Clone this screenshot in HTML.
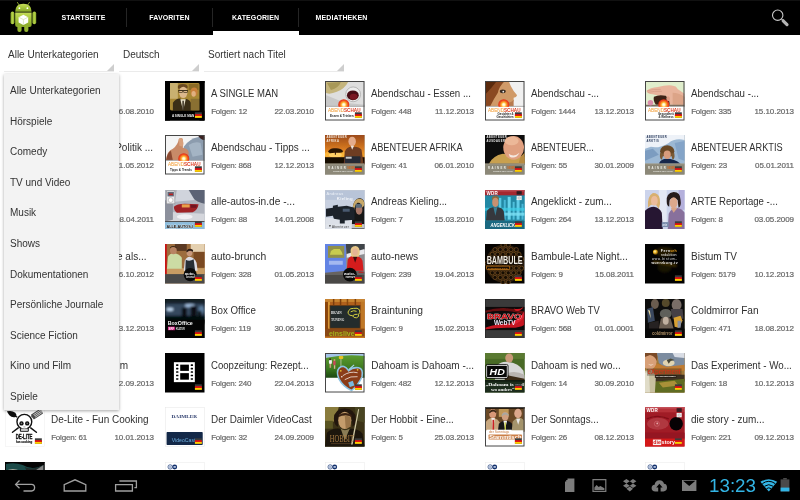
<!DOCTYPE html>
<html lang="de"><head><meta charset="utf-8"><title>Podcasts</title>
<style>
html,body{margin:0;padding:0;}
body{width:800px;height:500px;overflow:hidden;background:#fff;position:relative;font-family:"Liberation Sans",sans-serif;color:#333;}
#bar{position:absolute;left:0;top:0;width:800px;height:35px;background:#000;border-top:1px solid #111;box-sizing:border-box;}
#bar .tab{will-change:transform;position:absolute;top:-1px;height:35px;line-height:35px;color:#fff;font-size:7px;font-weight:bold;text-align:center;letter-spacing:0.1px;}
#bar .dv{position:absolute;top:6.5px;height:19.5px;width:1px;background:#252525;}
#bar .sel{position:absolute;left:213px;top:30px;width:86px;height:4px;background:#fff;}
.sp{will-change:transform;position:absolute;top:48px;height:23px;border-bottom:1px solid #ebebeb;font-size:10px;line-height:14px;color:#333;}
.sp span{position:absolute;left:4px;top:0;white-space:nowrap;}
.sp i{position:absolute;right:0;bottom:0;width:0;height:0;border-left:7px solid transparent;border-bottom:7px solid #cecece;}
#grid{will-change:transform;position:absolute;left:0;top:0;width:800px;height:470px;overflow:hidden;}
.it{position:absolute;width:160px;height:40px;}
.it .th{position:absolute;left:5px;top:0;width:39.5px;height:39.5px;display:block;overflow:hidden;}
.it .t{position:absolute;left:51.3px;top:6.5px;font-size:10px;line-height:12px;white-space:nowrap;color:#303030;transform-origin:0 50%;}
.it .n{position:absolute;left:51.2px;top:25.7px;font-size:8px;line-height:10px;white-space:nowrap;color:#666;letter-spacing:-0.2px;-webkit-text-stroke:0.2px #666;}
.it .d{position:absolute;right:6px;top:25.7px;font-size:8px;line-height:10px;white-space:nowrap;color:#666;letter-spacing:-0.05px;-webkit-text-stroke:0.2px #666;}
#menu{will-change:transform;position:absolute;left:4px;top:73.5px;width:115px;height:336px;background:#f3f3f3;box-shadow:0 1px 3px rgba(0,0,0,0.35);}
#menu .mi{height:30.6px;line-height:33.7px;padding-left:6px;font-size:10px;color:#333;white-space:nowrap;box-sizing:border-box;overflow:visible;}
#menu .mi:last-child{border-bottom:none;}
#nav{position:absolute;left:0;top:470px;width:800px;height:30px;background:#000;}
#nav svg{position:absolute;left:0;top:0;}
#clock{will-change:transform;position:absolute;left:709.3px;top:4.2px;font-size:18.8px;line-height:24px;color:#33b5e5;white-space:nowrap;letter-spacing:0;}

</style></head>
<body>
<svg width="0" height="0" style="position:absolute">
<defs>
<filter id="b05" x="-10%" y="-10%" width="120%" height="120%"><feGaussianBlur stdDeviation="0.3"/></filter>
<filter id="b1" x="-10%" y="-10%" width="120%" height="120%"><feGaussianBlur stdDeviation="0.5"/></filter>
<filter id="b2" x="-20%" y="-20%" width="140%" height="140%"><feGaussianBlur stdDeviation="1.3"/></filter>
<radialGradient id="sun" cx="0.5" cy="0.5" r="0.5"><stop offset="0" stop-color="#fff"/><stop offset="0.22" stop-color="#fff4c0"/><stop offset="0.45" stop-color="#ffb030"/><stop offset="0.75" stop-color="#f0501c"/><stop offset="1" stop-color="#e02c18"/></radialGradient>
<radialGradient id="globe" cx="0.4" cy="0.4" r="0.6"><stop offset="0" stop-color="#fff8c0"/><stop offset="0.5" stop-color="#e8b020"/><stop offset="1" stop-color="#6a4808"/></radialGradient>
<linearGradient id="sunset" x1="0" y1="0" x2="0" y2="1"><stop offset="0" stop-color="#9c4a1a"/><stop offset="0.45" stop-color="#d47820"/><stop offset="0.68" stop-color="#f09c28"/><stop offset="1" stop-color="#7a3a10"/></linearGradient>
<linearGradient id="grass" x1="0" y1="0" x2="0" y2="1"><stop offset="0" stop-color="#5c9c30"/><stop offset="0.6" stop-color="#3c7820"/><stop offset="1" stop-color="#1c4810"/></linearGradient>
<linearGradient id="droid" x1="0" y1="0" x2="0" y2="1"><stop offset="0" stop-color="#c4dc58"/><stop offset="0.5" stop-color="#a4c439"/><stop offset="1" stop-color="#86a428"/></linearGradient>
<linearGradient id="droidarm" x1="0" y1="0" x2="1" y2="0"><stop offset="0" stop-color="#8cac2c"/><stop offset="0.5" stop-color="#b4d048"/><stop offset="1" stop-color="#8cac2c"/></linearGradient>
</defs>
</svg>
<div id="bar">
<svg id="logo" style="position:absolute;left:0;top:-1px" width="50" height="35" viewBox="0 0 50 35">
<path d="M17.4 2.4 L19.2 5.2 M29.4 2.4 L27.6 5.2" stroke="#a4c439" stroke-width="0.8" stroke-linecap="round"/>
<path d="M15.2 11.8 Q15.2 4 23.4 3.8 Q31.6 4 31.6 11.8 Z" fill="url(#droid)"/>
<circle cx="19.4" cy="8.2" r="0.9" fill="#fff"/><circle cx="27.4" cy="8.2" r="0.9" fill="#fff"/>
<path d="M15.2 12.6 L31.6 12.6 L31.6 25 Q31.6 27 29.6 27 L17.2 27 Q15.2 27 15.2 25 Z" fill="url(#droid)"/>
<rect x="10.6" y="11.6" width="3.8" height="12.6" rx="1.9" fill="url(#droidarm)"/>
<rect x="32.4" y="11.6" width="3.8" height="12.6" rx="1.9" fill="url(#droidarm)"/>
<rect x="17.4" y="25" width="4.2" height="7" rx="2" fill="#94b430"/>
<rect x="24.2" y="25" width="4.2" height="7" rx="2" fill="#94b430"/>
<path d="M23.4 14.8 L28.2 17.2 L28.2 22.6 L23.4 25 L18.6 22.6 L18.6 17.2 Z" fill="#fff"/>
<path d="M18.6 17.2 L23.4 19.6 L28.2 17.2 M23.4 19.6 L23.4 25" stroke="#c8d8a0" stroke-width="0.6" fill="none"/>
</svg>
<div class="tab" style="left:41px;width:85px">STARTSEITE</div>
<div class="dv" style="left:126px"></div>
<div class="tab" style="left:127px;width:85px">FAVORITEN</div>
<div class="dv" style="left:212px"></div>
<div class="tab" style="left:213px;width:85px">KATEGORIEN</div>
<div class="dv" style="left:298px"></div>
<div class="tab" style="left:299px;width:85px">MEDIATHEKEN</div>
<div class="sel"></div>
<svg style="position:absolute;left:765px;top:-1px" width="35" height="35" viewBox="0 0 35 35">
<circle cx="12.7" cy="15.2" r="5.2" fill="none" stroke="#c8c8c8" stroke-width="1.1"/>
<path d="M16.6 19.2 L18 20.6" stroke="#c8c8c8" stroke-width="1.2"/>
<path d="M18.2 20.8 L22 24.6" stroke="#b4b4b4" stroke-width="3.2" stroke-linecap="round"/>
</svg>
</div>
<div class="sp" style="left:4px;width:110px"><span>Alle Unterkategorien</span><i></i></div>
<div class="sp" style="left:119px;width:80px"><span>Deutsch</span><i></i></div>
<div class="sp" style="left:204px;width:140px"><span>Sortiert nach Titel</span><i></i></div>
<div id="grid">
<div class="it" style="left:0px;top:81.0px"><span class="d">16.08.2010</span></div>
<div class="it" style="left:160px;top:81.0px"><svg class="th" width="39.5" height="39.5" viewBox="0 0 40 40"><rect width="40" height="40" fill="#000"/><g filter="url(#b1)"><rect x="5" y="2" width="30.5" height="28" rx="2" fill="#a88834"/><rect x="5" y="2" width="8" height="16" fill="#c8b070"/><rect x="24" y="3" width="10" height="6" fill="#8a6a28"/><ellipse cx="29.5" cy="11" rx="3.5" ry="4.5" fill="#c8803a"/><ellipse cx="29" cy="13" rx="2.2" ry="3" fill="#e0b080"/><ellipse cx="18" cy="6" rx="5" ry="3" fill="#6a4a20"/><ellipse cx="18.5" cy="11.5" rx="4.3" ry="5.8" fill="#dcb88c"/><rect x="13.5" y="9.4" width="9.5" height="0.7" fill="#2a2010"/><rect x="14" y="9.6" width="3.6" height="2" fill="none" stroke="#2a2010" stroke-width="0.6"/><rect x="19" y="9.6" width="3.6" height="2" fill="none" stroke="#2a2010" stroke-width="0.6"/><path d="M8 30 L8 22 Q12 17 16 18 L18 22 L21 18 Q26 19 27 24 L27 30 Z" fill="#3a2e18"/><path d="M15.5 18.5 L18.3 30 L21 18.5 Z" fill="#e8e0c8"/><rect x="17.6" y="20" width="1.5" height="10" fill="#3a3020"/><rect x="26" y="18" width="9.5" height="12" fill="#8a7030"/></g><rect x="0" y="30" width="40" height="10" fill="#000"/><rect x="0" y="0" width="5" height="40" fill="#000"/><rect x="35" y="0" width="5" height="40" fill="#000"/><rect x="0" y="0" width="40" height="2" fill="#000"/><text x="7" y="36.5" font-family="Liberation Sans, sans-serif" font-size="4" font-weight="bold" fill="#f0f0f0" textLength="22.5" lengthAdjust="spacingAndGlyphs">A SINGLE MAN</text><g transform="translate(30.3,31.7)"><rect width="7" height="5.6" fill="#3c3c3c"/><rect y="1.9" width="7" height="1.9" fill="#e01010"/><rect y="3.7" width="7" height="1.9" fill="#ffce00"/></g></svg><span class="t" style="transform:scaleX(0.952)">A SINGLE MAN</span><span class="n">Folgen: 12</span><span class="d">22.03.2010</span></div>
<div class="it" style="left:320px;top:81.0px"><svg class="th" width="39.5" height="39.5" viewBox="0 0 40 40"><rect width="40" height="40" fill="#fff"/><g filter="url(#b1)"><rect width="40" height="26" fill="#dedede"/><path d="M0 0 L24 0 Q20 8 12 11 Q5 14 0 12 Z" fill="#c4b47c"/><path d="M2 2 L16 1 Q14 7 6 9 Z" fill="#a89858"/><path d="M0 14 L20 22 L40 24 L40 26 L0 26 Z" fill="#c8c8c8"/><circle cx="28.5" cy="13.5" r="7.5" fill="#ececec" stroke="#aaa" stroke-width="0.8"/><ellipse cx="28.2" cy="14.5" rx="6" ry="5" fill="#4a0c14"/><ellipse cx="29" cy="16" rx="4" ry="3" fill="#7a1820"/></g><rect x="0" y="25.6" width="40" height="15" fill="#fff"/><rect x="0" y="25.2" width="40" height="0.8" fill="#999"/><circle cx="19" cy="24" r="5.6" fill="url(#sun)"/><rect x="13" y="26.2" width="12" height="4" fill="#fff"/><text x="3" y="31.4" font-family="Liberation Sans, sans-serif" font-size="5.4" textLength="33" lengthAdjust="spacingAndGlyphs"><tspan fill="#f29a2e">ABEND</tspan><tspan fill="#dc3a1e" font-weight="bold">SCHAU</tspan></text><text x="5" y="36.2" font-family="Liberation Sans, sans-serif" font-size="3.1" font-weight="bold" fill="#222">Essen &amp; Trinken</text><rect x="0.5" y="0.5" width="39" height="39" fill="none" stroke="#444" stroke-width="1"/><g transform="translate(30.3,31.7)"><rect width="7" height="5.6" fill="#3c3c3c"/><rect y="1.9" width="7" height="1.9" fill="#e01010"/><rect y="3.7" width="7" height="1.9" fill="#ffce00"/></g></svg><span class="t" style="transform:scaleX(0.967)">Abendschau - Essen ...</span><span class="n">Folgen: 448</span><span class="d">11.12.2013</span></div>
<div class="it" style="left:480px;top:81.0px"><svg class="th" width="39.5" height="39.5" viewBox="0 0 40 40"><rect width="40" height="40" fill="#fff"/><g filter="url(#b1)"><rect width="40" height="26" fill="#f0f0f0"/><path d="M0 0 L24 0 Q26 6 29 10 L32.5 14.5 Q32 17 29 17 L29 20 Q27 23 26 26 L0 26 Z" fill="#d09a68"/><path d="M0 0 L20 0 Q14 6 13 12 Q9 18 5 26 L0 26 Z" fill="#8a4a20"/><path d="M0 0 L12 0 Q6 8 0 14 Z" fill="#5a2a10"/><ellipse cx="18" cy="10.5" rx="3" ry="2" fill="#3a2a20"/><circle cx="18.5" cy="10.8" r="0.9" fill="#eee"/><path d="M22 22 Q27 22 29 19 L29 26 L20 26 Z" fill="#b87a50"/></g><rect x="0" y="25.6" width="40" height="15" fill="#fff"/><rect x="0" y="25.2" width="40" height="0.8" fill="#999"/><circle cx="19" cy="24" r="5.6" fill="url(#sun)"/><rect x="13" y="26.2" width="12" height="4" fill="#fff"/><text x="3" y="31.4" font-family="Liberation Sans, sans-serif" font-size="5.4" textLength="33" lengthAdjust="spacingAndGlyphs"><tspan fill="#f29a2e">ABEND</tspan><tspan fill="#dc3a1e" font-weight="bold">SCHAU</tspan></text><text x="29" y="34.2" font-family="Liberation Sans, sans-serif" font-size="2.9" font-weight="bold" fill="#222" text-anchor="end">Gesichter &amp;</text><text x="29" y="37.6" font-family="Liberation Sans, sans-serif" font-size="2.9" font-weight="bold" fill="#222" text-anchor="end">Geschichten</text><rect x="0.5" y="0.5" width="39" height="39" fill="none" stroke="#444" stroke-width="1"/><g transform="translate(30.3,31.7)"><rect width="7" height="5.6" fill="#3c3c3c"/><rect y="1.9" width="7" height="1.9" fill="#e01010"/><rect y="3.7" width="7" height="1.9" fill="#ffce00"/></g></svg><span class="t" style="transform:scaleX(0.971)">Abendschau -...</span><span class="n">Folgen: 1444</span><span class="d">13.12.2013</span></div>
<div class="it" style="left:640px;top:81.0px"><svg class="th" width="39.5" height="39.5" viewBox="0 0 40 40"><rect width="40" height="40" fill="#fff"/><g filter="url(#b1)"><rect width="40" height="26" fill="#e0eecc"/><path d="M1.5 10 Q5 6.5 13 6 Q21 4 27 4.5 Q32 5 33 8 Q36 10 40 13 L40 24 L25 24 Q24 18 21 15 Q14 15.5 8 13.5 Q2 13 1.5 10 Z" fill="#e8b49c"/><path d="M2 10 Q8 8 16 8.5 M3 11.5 Q9 10 17 10.5" stroke="#d09880" stroke-width="0.6" fill="none"/><path d="M28 12 Q34 12 40 16 L40 24 L28 24 Z" fill="#dca488"/><path d="M9 16 Q14 13.5 21 15 Q25 19 25 24 L11 24 Q8 20 9 16 Z" fill="#3c2418"/><ellipse cx="23.4" cy="18" rx="1.8" ry="2.6" fill="#dc9c84"/><path d="M0 24 L40 24 L40 26 L0 26 Z" fill="#7a6a5a"/><circle cx="5.5" cy="22" r="2.8" fill="#dc8cac"/></g><rect x="0" y="25.6" width="40" height="15" fill="#fff"/><rect x="0" y="25.2" width="40" height="0.8" fill="#999"/><circle cx="19" cy="24" r="5.6" fill="url(#sun)"/><rect x="13" y="26.2" width="12" height="4" fill="#fff"/><text x="3" y="31.4" font-family="Liberation Sans, sans-serif" font-size="5.4" textLength="33" lengthAdjust="spacingAndGlyphs"><tspan fill="#f29a2e">ABEND</tspan><tspan fill="#dc3a1e" font-weight="bold">SCHAU</tspan></text><text x="29" y="34.2" font-family="Liberation Sans, sans-serif" font-size="2.9" font-weight="bold" fill="#222" text-anchor="end">Gesundheit</text><text x="29" y="37.6" font-family="Liberation Sans, sans-serif" font-size="2.9" font-weight="bold" fill="#222" text-anchor="end">&amp; Wellness</text><rect x="0.5" y="0.5" width="39" height="39" fill="none" stroke="#444" stroke-width="1"/><g transform="translate(30.3,31.7)"><rect width="7" height="5.6" fill="#3c3c3c"/><rect y="1.9" width="7" height="1.9" fill="#e01010"/><rect y="3.7" width="7" height="1.9" fill="#ffce00"/></g></svg><span class="t" style="transform:scaleX(0.971)">Abendschau -...</span><span class="n">Folgen: 335</span><span class="d">15.10.2013</span></div>
<div class="it" style="left:0px;top:135.4px"><span class="t" style="left:auto;right:7px">Politik ...</span><span class="d">11.05.2012</span></div>
<div class="it" style="left:160px;top:135.4px"><svg class="th" width="39.5" height="39.5" viewBox="0 0 40 40"><rect width="40" height="40" fill="#fff"/><g filter="url(#b1)"><rect width="40" height="26" fill="#f4f4f4"/><path d="M18 26 L19 12 Q24 4 34 2 L40 2 L40 26 Z" fill="#8c9cae"/><path d="M24 10 Q30 6 36 8 L38 20 L28 22 Z" fill="#a4b4c4"/><path d="M33 0 L40 0 L40 5 Q36 5 33 0 Z" fill="#3a2420"/><path d="M1 26 Q2 16 8 14 Q13 10 14 4 Q16 2 18 4 Q19 9 18 13 Q24 14 24 18 Q24 24 20 26 Z" fill="#c88a68"/><path d="M14 4 Q16 2 18 4 Q19 8 18 12 L14.5 11 Z" fill="#d8a07c"/><path d="M1 26 Q2 18 6 16 L8 26 Z" fill="#8a4a30"/></g><rect x="0" y="25.6" width="40" height="15" fill="#fff"/><rect x="0" y="25.2" width="40" height="0.8" fill="#999"/><circle cx="19" cy="24" r="5.6" fill="url(#sun)"/><rect x="13" y="26.2" width="12" height="4" fill="#fff"/><text x="3" y="31.4" font-family="Liberation Sans, sans-serif" font-size="5.4" textLength="33" lengthAdjust="spacingAndGlyphs"><tspan fill="#f29a2e">ABEND</tspan><tspan fill="#dc3a1e" font-weight="bold">SCHAU</tspan></text><text x="5" y="36.2" font-family="Liberation Sans, sans-serif" font-size="3.1" font-weight="bold" fill="#222">Tipps &amp; Trends</text><rect x="0.5" y="0.5" width="39" height="39" fill="none" stroke="#444" stroke-width="1"/><g transform="translate(30.3,31.7)"><rect width="7" height="5.6" fill="#3c3c3c"/><rect y="1.9" width="7" height="1.9" fill="#e01010"/><rect y="3.7" width="7" height="1.9" fill="#ffce00"/></g></svg><span class="t" style="transform:scaleX(0.993)">Abendschau - Tipps ...</span><span class="n">Folgen: 868</span><span class="d">12.12.2013</span></div>
<div class="it" style="left:320px;top:135.4px"><svg class="th" width="39.5" height="39.5" viewBox="0 0 40 40"><rect width="40" height="40" fill="#8a8878"/><g filter="url(#b1)"><rect width="40" height="30" fill="url(#sunset)"/><ellipse cx="10.5" cy="20.2" rx="6.5" ry="2.8" fill="#fff6c0"/><ellipse cx="10.5" cy="20" rx="11" ry="4.6" fill="#ffc040" opacity="0.7"/><path d="M3 17 Q5 13 10 13.5 Q16 13 18 16 Q19 18 15 18 L11 18 L11 20 L10 20 L10 18 L5 18.5 Z" fill="#2a1206"/><rect x="0" y="22.5" width="40" height="7" fill="#180a04"/><path d="M19 29 L20 17 Q22 12 27 12 Q34 11 37 15 L39 29 Z" fill="#6e3c20"/><ellipse cx="27.5" cy="6.5" rx="3.8" ry="4.8" fill="#e4ac8c"/><path d="M26 11 L27.5 15 L29.5 11 Z" fill="#e8e0d8"/><rect x="20" y="21.5" width="16" height="7" rx="1" fill="#282c34"/><rect x="21" y="22" width="6" height="2" fill="#c8c8c8"/></g><rect x="0" y="29" width="40" height="11" fill="#8c8878"/><rect x="0" y="29" width="40" height="0.6" fill="#b0a890"/><text x="3" y="34" font-family="Liberation Sans, sans-serif" font-size="2.8" font-weight="bold" fill="#f0f0e8" textLength="18">RAINER</text><text x="22.5" y="34" font-family="Liberation Sans, sans-serif" font-size="2.8" font-weight="bold" fill="#c86a28" textLength="8">MEYER</text><text x="8" y="37.4" font-family="Liberation Sans, sans-serif" font-size="2.2" font-weight="bold" fill="#e8e8e0" textLength="20">LEBEN MIT DEN</text><text x="1.4" y="3.5" font-family="Liberation Sans, sans-serif" font-size="2.7" font-weight="bold" fill="#f4ece0" textLength="20.6">ABENTEUER</text><text x="1.4" y="6.7" font-family="Liberation Sans, sans-serif" font-size="2.7" font-weight="bold" fill="#f4ece0" letter-spacing="0.5">AFRIKA</text><g transform="translate(30.3,31.7)"><rect width="7" height="5.6" fill="#3c3c3c"/><rect y="1.9" width="7" height="1.9" fill="#e01010"/><rect y="3.7" width="7" height="1.9" fill="#ffce00"/></g></svg><span class="t" style="transform:scaleX(0.921)">ABENTEUER AFRIKA</span><span class="n">Folgen: 41</span><span class="d">06.01.2010</span></div>
<div class="it" style="left:480px;top:135.4px"><svg class="th" width="39.5" height="39.5" viewBox="0 0 40 40"><rect width="40" height="40" fill="#8a8878"/><g filter="url(#b1)"><rect width="40" height="30" fill="#0c0a08"/><path d="M4 29 Q8 21 18 19 L40 22 L40 29 Z" fill="#c8a050"/><ellipse cx="29" cy="13" rx="10.5" ry="12" fill="#e0a080"/><ellipse cx="27" cy="6" rx="7" ry="4.5" fill="#ecb898"/><path d="M24 19 Q29 23 35 18 Q31 25 25 22 Z" fill="#f4e8e0"/><path d="M36 22 L40 18 L40 29 L34 29 Z" fill="#b88a40"/></g><rect x="0" y="29" width="40" height="11" fill="#8c8878"/><rect x="0" y="29" width="40" height="0.6" fill="#b0a890"/><text x="3" y="34" font-family="Liberation Sans, sans-serif" font-size="2.8" font-weight="bold" fill="#f0f0e8" textLength="18">RAINER</text><text x="22.5" y="34" font-family="Liberation Sans, sans-serif" font-size="2.8" font-weight="bold" fill="#c86a28" textLength="8">MEYER</text><text x="8" y="37.4" font-family="Liberation Sans, sans-serif" font-size="2.2" font-weight="bold" fill="#e8e8e0" textLength="20">LEBEN MIT DEN</text><text x="1.4" y="3.5" font-family="Liberation Sans, sans-serif" font-size="2.7" font-weight="bold" fill="#f0f0f0" textLength="20.6">ABENTEUER</text><text x="1.4" y="6.7" font-family="Liberation Sans, sans-serif" font-size="2.7" font-weight="bold" fill="#f0f0f0" letter-spacing="0.5">AUSDAUER</text><g transform="translate(30.3,31.7)"><rect width="7" height="5.6" fill="#3c3c3c"/><rect y="1.9" width="7" height="1.9" fill="#e01010"/><rect y="3.7" width="7" height="1.9" fill="#ffce00"/></g></svg><span class="t" style="transform:scaleX(0.904)">ABENTEUER...</span><span class="n">Folgen: 55</span><span class="d">30.01.2009</span></div>
<div class="it" style="left:640px;top:135.4px"><svg class="th" width="39.5" height="39.5" viewBox="0 0 40 40"><rect width="40" height="40" fill="#8a8878"/><g filter="url(#b1)"><rect width="40" height="30" fill="#9cb8d4"/><path d="M0 0 L40 0 L40 5 Q30 3 24 8 Q14 14 6 12 L0 14 Z" fill="#eef2f8"/><path d="M0 16 L8 14 L14 20 L0 26 Z" fill="#7c9cc0"/><path d="M30 8 L40 6 L40 26 L34 24 Z" fill="#84a4c8"/><path d="M14 29 Q16 24 22 24 Q30 24 36 29 Z" fill="#18284a"/><ellipse cx="22.5" cy="16.5" rx="7.2" ry="6" fill="#6a4a28"/><path d="M15.5 18 Q14 24 17 25 L19 19 Z" fill="#7a5a34"/><path d="M29.5 18 Q31 24 28 25 L26 19 Z" fill="#7a5a34"/><ellipse cx="22.5" cy="20" rx="3.6" ry="4.2" fill="#d89c7c"/></g><rect x="0" y="29" width="40" height="11" fill="#8c8878"/><rect x="0" y="29" width="40" height="0.6" fill="#b0a890"/><text x="3" y="34" font-family="Liberation Sans, sans-serif" font-size="2.8" font-weight="bold" fill="#f0f0e8" textLength="18">RAINER</text><text x="22.5" y="34" font-family="Liberation Sans, sans-serif" font-size="2.8" font-weight="bold" fill="#c86a28" textLength="8">MEYER</text><text x="8" y="37.4" font-family="Liberation Sans, sans-serif" font-size="2.2" font-weight="bold" fill="#e8e8e0" textLength="20">LEBEN MIT DEN</text><text x="1.4" y="3.5" font-family="Liberation Sans, sans-serif" font-size="2.7" font-weight="bold" fill="#283858" textLength="20.6">ABENTEUER</text><text x="1.4" y="6.7" font-family="Liberation Sans, sans-serif" font-size="2.7" font-weight="bold" fill="#283858" letter-spacing="0.5">ARKTIS</text><g transform="translate(30.3,31.7)"><rect width="7" height="5.6" fill="#3c3c3c"/><rect y="1.9" width="7" height="1.9" fill="#e01010"/><rect y="3.7" width="7" height="1.9" fill="#ffce00"/></g></svg><span class="t" style="transform:scaleX(0.921)">ABENTEUER ARKTIS</span><span class="n">Folgen: 23</span><span class="d">05.01.2011</span></div>
<div class="it" style="left:0px;top:189.8px"><span class="d">08.04.2011</span></div>
<div class="it" style="left:160px;top:189.8px"><svg class="th" width="39.5" height="39.5" viewBox="0 0 40 40"><rect width="40" height="40" fill="#b4b8c0"/><g filter="url(#b1)"><rect width="40" height="32" fill="#b0b4be"/><path d="M22 0 L40 0 L40 14 Q32 12 28 8 Z" fill="#5c6474"/><path d="M12 0 L24 0 L30 10 L10 12 Z" fill="#d0d4dc"/><path d="M0 22 L40 24 L40 32 L0 32 Z" fill="#d4d6dc"/><path d="M0 10 L8 14 L8 30 L0 32 Z" fill="#8c909c"/><path d="M9 17 Q12 14 20 14 L34 14.5 Q33 21 28 22.5 L12 23 Q9 21 9 17 Z" fill="#a02028"/><rect x="17" y="14.5" width="8" height="3.2" fill="#e8a048"/><rect x="26" y="15" width="6" height="3" fill="#701820"/><ellipse cx="20" cy="27" rx="8" ry="2.5" fill="#f0f0f4"/></g><rect x="1.5" y="1" width="8.5" height="13" fill="#e8e8ec" stroke="#888" stroke-width="0.5"/><rect x="2.5" y="2" width="6.5" height="4.5" fill="#606878"/><rect x="4" y="3.6" width="4" height="1.6" fill="#c02020"/><circle cx="5.7" cy="10.2" r="2.4" fill="#fff" stroke="#aaa" stroke-width="0.6"/><rect x="0" y="31.5" width="40" height="1" fill="#444"/><rect x="0" y="32.5" width="40" height="7.5" fill="#8cbcdc"/><text x="1.5" y="38" font-family="Liberation Sans, sans-serif" font-size="4.4" font-weight="bold" fill="#111" stroke="#f4f4f4" stroke-width="0.5" paint-order="stroke" textLength="27" lengthAdjust="spacingAndGlyphs">ALLE-AUTOS-I</text><g transform="translate(30.3,31.7)"><rect width="7" height="5.6" fill="#3c3c3c"/><rect y="1.9" width="7" height="1.9" fill="#e01010"/><rect y="3.7" width="7" height="1.9" fill="#ffce00"/></g></svg><span class="t" style="transform:scaleX(1.014)">alle-autos-in.de -...</span><span class="n">Folgen: 88</span><span class="d">14.01.2008</span></div>
<div class="it" style="left:320px;top:189.8px"><svg class="th" width="39.5" height="39.5" viewBox="0 0 40 40"><rect width="40" height="40" fill="#ccd4e2"/><g filter="url(#b1)"><rect width="40" height="40" fill="#c8d0e0"/><rect x="0" y="0" width="40" height="10" fill="#b8c4d8"/><path d="M0 28 L40 30 L40 40 L0 40 Z" fill="#dce0e8"/><path d="M27 40 L28 18 Q29 9 35 8 Q40 9 40 14 L40 40 Z" fill="#141414"/><path d="M28 18 Q29 9 35 8.5 Q40 9.5 40 15 L38 18 Q36 12 33 13 Q30 15 30 20 Z" fill="#c8a868"/><ellipse cx="34.5" cy="20" rx="3.4" ry="5" fill="#a87868"/><rect x="31" y="14" width="6" height="4" fill="#5a6a78"/><path d="M1 19 L8 18 L8 16 L13 15 L13 17 L22 16 L30 18 L30 30 L20 31 L20 34 L15 34 L15 30 L9 29 L8 26 L1 27 Z" fill="#1c242c"/><rect x="18" y="19" width="7" height="3" fill="#4a5a70"/></g><text x="1.5" y="5.5" font-family="Liberation Sans, sans-serif" font-size="4" fill="#eef2f8" textLength="17">Andreas</text><text x="12" y="10" font-family="Liberation Sans, sans-serif" font-size="4.4" font-weight="bold" fill="#f4f6fa" textLength="16">Kieling</text><rect x="0" y="34.5" width="40" height="4.5" fill="#dfe3ea" opacity="0.85"/><path d="M4 35.8 L6 35.8 L5 37.4 Z" fill="#222"/><text x="7" y="38" font-family="Liberation Sans, sans-serif" font-size="3" fill="#333" textLength="17">Abenteuer</text><rect x="0.2" y="0.2" width="39.6" height="39.6" fill="none" stroke="#c8ccd4" stroke-width="0.4"/><g transform="translate(30.3,31.7)"><rect width="7" height="5.6" fill="#3c3c3c"/><rect y="1.9" width="7" height="1.9" fill="#e01010"/><rect y="3.7" width="7" height="1.9" fill="#ffce00"/></g></svg><span class="t" style="transform:scaleX(0.97)">Andreas Kieling...</span><span class="n">Folgen: 7</span><span class="d">15.03.2010</span></div>
<div class="it" style="left:480px;top:189.8px"><svg class="th" width="39.5" height="39.5" viewBox="0 0 40 40"><rect width="40" height="40" fill="#2890a8"/><g filter="url(#b05)"><rect x="0" y="5" width="40" height="27" fill="#2488a4"/><rect x="14" y="8" width="2.5" height="22" fill="#58c8e4"/><rect x="19" y="10" width="2" height="20" fill="#48b8d8"/><rect x="23" y="7" width="3" height="23" fill="#68d4ec"/><rect x="28" y="12" width="2" height="18" fill="#50c0dc"/><rect x="32" y="9" width="3" height="21" fill="#60cce8"/><rect x="37" y="14" width="2" height="16" fill="#48b8d8"/><rect x="0" y="18" width="40" height="3" fill="#40d0e8" opacity="0.7"/><rect x="20" y="23" width="20" height="3" fill="#7ce0f4" opacity="0.8"/><path d="M1 31 L2 21 Q4 18 8 17.5 L13 17.5 Q18 18 19 22 L20 31 Z" fill="#34383c"/><path d="M8.5 17.5 L10.5 26 L12.5 17.5 Z" fill="#3a8098"/><ellipse cx="10.5" cy="8.5" rx="3.5" ry="2.5" fill="#8a6a3c"/><ellipse cx="10.5" cy="12.5" rx="3.2" ry="4.6" fill="#c89070"/></g><rect x="0" y="0" width="40" height="5.4" fill="#a42830"/><rect x="0" y="0" width="40" height="1.6" fill="#b84850"/><text x="1.4" y="4.7" font-family="Liberation Sans, sans-serif" font-size="4.6" font-weight="bold" fill="#fff" textLength="11.5">WDR</text><rect x="32" y="1.2" width="5.2" height="3.4" fill="#2a1a20"/><rect x="32" y="6" width="5.2" height="4.2" fill="#f0f0f0"/><circle cx="34.6" cy="8.1" r="1.2" fill="none" stroke="#888" stroke-width="0.4"/><rect x="0" y="31.5" width="40" height="8.5" fill="#1a6880"/><text x="5.5" y="37.8" font-family="Liberation Sans, sans-serif" font-size="5" font-weight="bold" font-style="italic" fill="#fff" textLength="25" lengthAdjust="spacingAndGlyphs">ANGEKLICK</text><g transform="translate(30.3,31.7)"><rect width="7" height="5.6" fill="#3c3c3c"/><rect y="1.9" width="7" height="1.9" fill="#e01010"/><rect y="3.7" width="7" height="1.9" fill="#ffce00"/></g></svg><span class="t" style="transform:scaleX(0.989)">Angeklickt - zum...</span><span class="n">Folgen: 264</span><span class="d">13.12.2013</span></div>
<div class="it" style="left:640px;top:189.8px"><svg class="th" width="39.5" height="39.5" viewBox="0 0 40 40"><rect width="40" height="40" fill="#ccd4ea"/><g filter="url(#b1)"><rect width="40" height="40" fill="#ccd4ec"/><rect x="14" y="0" width="8" height="34" fill="#e4e8f4"/><rect x="34" y="0" width="6" height="20" fill="#b4b0dc"/><path d="M0 40 L0 21 Q4 17 9 17 Q15 18 17 23 L18 40 Z" fill="#281630"/><path d="M3 18 Q2 6 8 3 Q14 3 15 9 Q16 14 14 19 L11 15 L6 15 Z" fill="#d8b070"/><ellipse cx="9.5" cy="11" rx="3.4" ry="4.8" fill="#ecbc9c"/><path d="M23 40 L24 24 Q27 18 32 18 Q38 19 40 23 L40 40 Z" fill="#88709c"/><path d="M26 18 L29 23 L33 18 Z" fill="#d8a488"/><path d="M22 12 Q21 3 29 2 Q36 2 36 10 Q37 16 34 18 L33 10 Q28 6 25 10 L24.5 17 Q22 16 22 12 Z" fill="#281c1c"/><ellipse cx="29" cy="13" rx="4" ry="5.6" fill="#dca88c"/></g><rect x="17" y="32.5" width="7" height="5" fill="#7a8cac"/><text x="17.6" y="36.4" font-family="Liberation Sans, sans-serif" font-size="2.6" font-weight="bold" fill="#dfe6f4">arte</text><g transform="translate(30.3,31.7)"><rect width="7" height="5.6" fill="#3c3c3c"/><rect y="1.9" width="7" height="1.9" fill="#e01010"/><rect y="3.7" width="7" height="1.9" fill="#ffce00"/></g></svg><span class="t" style="transform:scaleX(0.96)">ARTE Reportage -...</span><span class="n">Folgen: 8</span><span class="d">03.05.2009</span></div>
<div class="it" style="left:0px;top:244.2px"><span class="t" style="left:auto;right:13.5px">e als...</span><span class="d">16.10.2012</span></div>
<div class="it" style="left:160px;top:244.2px"><svg class="th" width="39.5" height="39.5" viewBox="0 0 40 40"><rect width="40" height="40" fill="#b88858"/><g filter="url(#b1)"><rect width="40" height="31" fill="#9c6c3c"/><rect x="26" y="0" width="14" height="8" fill="#e4d0b0"/><rect x="10" y="0" width="12" height="7" fill="#5a3820"/><rect x="29" y="8" width="11" height="16" fill="#7a4820"/><rect x="0" y="24.5" width="40" height="6.5" fill="#c89c64"/><path d="M2 25 L3 13 Q5 9 9 9 Q15 10 17 14 L17 25 Z" fill="#ccdca4"/><ellipse cx="8.5" cy="6.5" rx="3.4" ry="3.8" fill="#b88464"/><path d="M5 4.5 Q8 1.5 12 4.5 L12 3.5 Q8 0.5 5 3.5 Z" fill="#3a2818"/><path d="M19 27 L20 17 Q22 13 25 13 Q30 14 32 19 L33 27 Z" fill="#dcdce4"/><path d="M20.5 27 L21 16 Q25 18 29 15.5 L30.5 27 Z" fill="#262e36"/><ellipse cx="24.8" cy="8.5" rx="3" ry="3.8" fill="#c8987c"/><path d="M21.5 7 Q24 3 28.5 6 L28 8 Q25 5.5 22 8.5 Z" fill="#2a1a14"/></g><rect x="0" y="0" width="1.8" height="31" fill="#c81414"/><rect x="0" y="30.5" width="40" height="9.5" fill="#4a4a4a"/><circle cx="25.5" cy="31" r="6.6" fill="#0a0a0a"/><text x="19.9" y="31.2" font-family="Liberation Sans, sans-serif" font-size="4" font-weight="bold" fill="#f4f4f4" textLength="10.7" lengthAdjust="spacingAndGlyphs">auto-</text><text x="21.4" y="34.8" font-family="Liberation Sans, sans-serif" font-size="3.6" font-weight="bold" fill="#e8e8e8" textLength="9.7" lengthAdjust="spacingAndGlyphs">brunch</text><g transform="translate(30.3,31.7)"><rect width="7" height="5.6" fill="#3c3c3c"/><rect y="1.9" width="7" height="1.9" fill="#e01010"/><rect y="3.7" width="7" height="1.9" fill="#ffce00"/></g></svg><span class="t" style="transform:scaleX(1.034)">auto-brunch</span><span class="n">Folgen: 328</span><span class="d">01.05.2013</span></div>
<div class="it" style="left:320px;top:244.2px"><svg class="th" width="39.5" height="39.5" viewBox="0 0 40 40"><rect width="40" height="40" fill="#787878"/><g filter="url(#b1)"><rect width="40" height="31" fill="#8c8c90"/><path d="M21 0 L40 0 L40 6 L22 10 Z" fill="#404448"/><path d="M22 10 L40 5 L40 10 L22 14 Z" fill="#e8e8ec"/><path d="M0 26 L22 25 L40 28 L40 31 L0 31 Z" fill="#686460"/><path d="M0 0 L21 0 L21.5 27 L0 29 Z" fill="#6484e4"/><rect x="3" y="2" width="16.5" height="12" fill="#909048"/><path d="M5 11 L6 7 L9 5 L15 5 L17 8 L18 11 Z" fill="#c8cc50"/><rect x="4" y="17" width="14" height="4" fill="#a4b8f0"/><path d="M22 27 L23 16 Q25 12 29 12 Q36 12 38 17 L39 27 Z" fill="#d41c1c"/><path d="M28 12 L30.5 19 L33 12 Z" fill="#401010"/><path d="M26 9 Q25 2 31 2 Q36 3 35 10 L34 13 L27 13 Z" fill="#e8c888"/><ellipse cx="30.5" cy="8" rx="2.8" ry="3.8" fill="#e4b494"/></g><rect x="0" y="31" width="40" height="9" fill="#4a4846"/><circle cx="25.2" cy="31" r="7" fill="#0a0a0a"/><text x="19.2" y="31.2" font-family="Liberation Sans, sans-serif" font-size="4" font-weight="bold" fill="#f4f4f4" textLength="11.5" lengthAdjust="spacingAndGlyphs">auto-</text><text x="20.7" y="34.8" font-family="Liberation Sans, sans-serif" font-size="3.6" font-weight="bold" fill="#e8e8e8" textLength="10.5" lengthAdjust="spacingAndGlyphs">news</text><rect x="34" y="28" width="5" height="1.2" fill="#c02020"/><g transform="translate(30.3,31.7)"><rect width="7" height="5.6" fill="#3c3c3c"/><rect y="1.9" width="7" height="1.9" fill="#e01010"/><rect y="3.7" width="7" height="1.9" fill="#ffce00"/></g></svg><span class="t" style="transform:scaleX(1.023)">auto-news</span><span class="n">Folgen: 239</span><span class="d">19.04.2013</span></div>
<div class="it" style="left:480px;top:244.2px"><svg class="th" width="39.5" height="39.5" viewBox="0 0 40 40"><rect width="40" height="40" fill="#060402"/><circle cx="20" cy="20" r="19.5" fill="#2e1e0c"/><g filter="url(#b05)"><circle cx="18.2" cy="1.0" r="2.1" fill="#140c06" stroke="#7a5220" stroke-width="0.7"/><circle cx="23.6" cy="1.0" r="2.1" fill="#140c06" stroke="#7a5220" stroke-width="0.7"/><circle cx="10.1" cy="5.7" r="2.1" fill="#140c06" stroke="#7a5220" stroke-width="0.7"/><circle cx="15.5" cy="5.7" r="2.1" fill="#140c06" stroke="#7a5220" stroke-width="0.7"/><circle cx="20.9" cy="5.7" r="2.1" fill="#140c06" stroke="#7a5220" stroke-width="0.7"/><circle cx="26.3" cy="5.7" r="2.1" fill="#140c06" stroke="#7a5220" stroke-width="0.7"/><circle cx="31.7" cy="5.7" r="2.1" fill="#140c06" stroke="#7a5220" stroke-width="0.7"/><circle cx="7.4" cy="10.4" r="2.1" fill="#140c06" stroke="#7a5220" stroke-width="0.7"/><circle cx="12.8" cy="10.4" r="2.1" fill="#140c06" stroke="#7a5220" stroke-width="0.7"/><circle cx="18.2" cy="10.4" r="2.1" fill="#140c06" stroke="#7a5220" stroke-width="0.7"/><circle cx="23.6" cy="10.4" r="2.1" fill="#140c06" stroke="#7a5220" stroke-width="0.7"/><circle cx="29.0" cy="10.4" r="2.1" fill="#140c06" stroke="#7a5220" stroke-width="0.7"/><circle cx="34.4" cy="10.4" r="2.1" fill="#140c06" stroke="#7a5220" stroke-width="0.7"/><circle cx="4.7" cy="15.1" r="2.1" fill="#140c06" stroke="#7a5220" stroke-width="0.7"/><circle cx="10.1" cy="15.1" r="2.1" fill="#140c06" stroke="#7a5220" stroke-width="0.7"/><circle cx="15.5" cy="15.1" r="2.1" fill="#140c06" stroke="#7a5220" stroke-width="0.7"/><circle cx="20.9" cy="15.1" r="2.1" fill="#140c06" stroke="#7a5220" stroke-width="0.7"/><circle cx="26.3" cy="15.1" r="2.1" fill="#140c06" stroke="#7a5220" stroke-width="0.7"/><circle cx="31.7" cy="15.1" r="2.1" fill="#140c06" stroke="#7a5220" stroke-width="0.7"/><circle cx="37.1" cy="15.1" r="2.1" fill="#140c06" stroke="#7a5220" stroke-width="0.7"/><circle cx="2.0" cy="19.8" r="2.1" fill="#140c06" stroke="#7a5220" stroke-width="0.7"/><circle cx="7.4" cy="19.8" r="2.1" fill="#140c06" stroke="#7a5220" stroke-width="0.7"/><circle cx="12.8" cy="19.8" r="2.1" fill="#140c06" stroke="#7a5220" stroke-width="0.7"/><circle cx="18.2" cy="19.8" r="2.1" fill="#140c06" stroke="#7a5220" stroke-width="0.7"/><circle cx="23.6" cy="19.8" r="2.1" fill="#140c06" stroke="#7a5220" stroke-width="0.7"/><circle cx="29.0" cy="19.8" r="2.1" fill="#140c06" stroke="#7a5220" stroke-width="0.7"/><circle cx="34.4" cy="19.8" r="2.1" fill="#140c06" stroke="#7a5220" stroke-width="0.7"/><circle cx="4.7" cy="24.5" r="2.1" fill="#140c06" stroke="#7a5220" stroke-width="0.7"/><circle cx="10.1" cy="24.5" r="2.1" fill="#140c06" stroke="#7a5220" stroke-width="0.7"/><circle cx="15.5" cy="24.5" r="2.1" fill="#140c06" stroke="#7a5220" stroke-width="0.7"/><circle cx="20.9" cy="24.5" r="2.1" fill="#140c06" stroke="#7a5220" stroke-width="0.7"/><circle cx="26.3" cy="24.5" r="2.1" fill="#140c06" stroke="#7a5220" stroke-width="0.7"/><circle cx="31.7" cy="24.5" r="2.1" fill="#140c06" stroke="#7a5220" stroke-width="0.7"/><circle cx="37.1" cy="24.5" r="2.1" fill="#140c06" stroke="#7a5220" stroke-width="0.7"/><circle cx="7.4" cy="29.2" r="2.1" fill="#140c06" stroke="#7a5220" stroke-width="0.7"/><circle cx="12.8" cy="29.2" r="2.1" fill="#140c06" stroke="#7a5220" stroke-width="0.7"/><circle cx="18.2" cy="29.2" r="2.1" fill="#140c06" stroke="#7a5220" stroke-width="0.7"/><circle cx="23.6" cy="29.2" r="2.1" fill="#140c06" stroke="#7a5220" stroke-width="0.7"/><circle cx="29.0" cy="29.2" r="2.1" fill="#140c06" stroke="#7a5220" stroke-width="0.7"/><circle cx="34.4" cy="29.2" r="2.1" fill="#140c06" stroke="#7a5220" stroke-width="0.7"/><circle cx="10.1" cy="33.9" r="2.1" fill="#140c06" stroke="#7a5220" stroke-width="0.7"/><circle cx="15.5" cy="33.9" r="2.1" fill="#140c06" stroke="#7a5220" stroke-width="0.7"/><circle cx="20.9" cy="33.9" r="2.1" fill="#140c06" stroke="#7a5220" stroke-width="0.7"/><circle cx="26.3" cy="33.9" r="2.1" fill="#140c06" stroke="#7a5220" stroke-width="0.7"/><circle cx="31.7" cy="33.9" r="2.1" fill="#140c06" stroke="#7a5220" stroke-width="0.7"/><circle cx="18.2" cy="38.6" r="2.1" fill="#140c06" stroke="#7a5220" stroke-width="0.7"/><circle cx="23.6" cy="38.6" r="2.1" fill="#140c06" stroke="#7a5220" stroke-width="0.7"/></g><rect x="1.5" y="12" width="37" height="9.6" fill="#0a0604" opacity="0.55"/><text x="1.7" y="20.5" font-family="Liberation Sans, sans-serif" font-size="10.8" font-weight="bold" fill="#f0ece4" textLength="36.4" lengthAdjust="spacingAndGlyphs">BAMBULE</text><rect x="1.5" y="22.4" width="23.5" height="3.4" rx="0.8" fill="#1a0e04" stroke="#c87818" stroke-width="0.8"/><text x="3" y="25.2" font-family="Liberation Sans, sans-serif" font-size="2.4" font-weight="bold" fill="#d88820" textLength="20">LATE NIGHT TALK</text><g transform="translate(30.3,31.7)"><rect width="7" height="5.6" fill="#3c3c3c"/><rect y="1.9" width="7" height="1.9" fill="#e01010"/><rect y="3.7" width="7" height="1.9" fill="#ffce00"/></g></svg><span class="t" style="transform:scaleX(1.001)">Bambule-Late Night...</span><span class="n">Folgen: 9</span><span class="d">15.08.2011</span></div>
<div class="it" style="left:640px;top:244.2px"><svg class="th" width="39.5" height="39.5" viewBox="0 0 40 40"><rect width="40" height="40" fill="#020202"/><g filter="url(#b2)"><ellipse cx="20" cy="8" rx="10" ry="5" fill="#4a3808" opacity="0.45"/><ellipse cx="20" cy="24" rx="7" ry="5" fill="#3a2c06" opacity="0.4"/><path d="M8 18 L32 22" stroke="#3a2c06" stroke-width="3"/></g><circle cx="10.6" cy="8.2" r="2.6" fill="url(#globe)"/><text x="16" y="8" font-family="Liberation Sans, sans-serif" font-size="3.6" font-weight="bold" fill="#f0f0f0" textLength="9.5">Fern</text><text x="25.5" y="8" font-family="Liberation Sans, sans-serif" font-size="3.6" font-weight="bold" fill="#e8a020" textLength="6.5">seh</text><text x="16" y="11.8" font-family="Liberation Sans, sans-serif" font-size="3.6" fill="#e8e8e8" textLength="16">redaktion</text><text x="7" y="16.2" font-family="Liberation Sans, sans-serif" font-size="3.2" fill="#e0e0e0" textLength="25">www.bistum-</text><text x="6.5" y="20" font-family="Liberation Sans, sans-serif" font-size="3.4" font-weight="bold" fill="#f0f0f0" textLength="26.5">wuerzburg.tv</text><g transform="translate(30.3,31.7)"><rect width="7" height="5.6" fill="#3c3c3c"/><rect y="1.9" width="7" height="1.9" fill="#e01010"/><rect y="3.7" width="7" height="1.9" fill="#ffce00"/></g></svg><span class="t" style="transform:scaleX(1.001)">Bistum TV</span><span class="n">Folgen: 5179</span><span class="d">10.12.2013</span></div>
<div class="it" style="left:0px;top:298.6px"><span class="d">13.12.2013</span></div>
<div class="it" style="left:160px;top:298.6px"><svg class="th" width="39.5" height="39.5" viewBox="0 0 40 40"><rect width="40" height="40" fill="#040404"/><g filter="url(#b2)"><rect width="40" height="20" fill="#34485e"/><rect width="40" height="5" fill="#16202c"/><ellipse cx="5" cy="10.5" rx="3.6" ry="2" fill="#b8d0e8"/><ellipse cx="25" cy="6.5" rx="5" ry="1.8" fill="#9cb8d8"/><ellipse cx="37" cy="11" rx="3" ry="4" fill="#5c7c9c"/><rect x="17" y="9" width="5" height="11" fill="#0c1018"/><rect x="26" y="7" width="6" height="14" fill="#0c1018"/><rect x="33" y="12" width="4" height="9" fill="#10161e"/><rect x="0" y="17" width="40" height="8" fill="#06080a"/></g><rect x="0" y="21" width="40" height="19" fill="#040404"/><text x="2.8" y="26.4" font-family="Liberation Sans, sans-serif" font-size="5.6" font-weight="bold" fill="#f4f4f4" textLength="25.4" lengthAdjust="spacingAndGlyphs">BoxOffice</text><rect x="3" y="28" width="7" height="3.6" fill="#dc1884"/><text x="3.6" y="30.9" font-family="Liberation Sans, sans-serif" font-size="2.8" font-weight="bold" fill="#fff" textLength="5.8">SRF</text><text x="11" y="30.9" font-family="Liberation Sans, sans-serif" font-size="2.6" font-weight="bold" fill="#ddd" textLength="9">KULTUR</text><g transform="translate(30.3,31.7)"><rect width="7" height="5.6" fill="#3c3c3c"/><rect y="1.9" width="7" height="1.9" fill="#e01010"/><rect y="3.7" width="7" height="1.9" fill="#ffce00"/></g></svg><span class="t" style="transform:scaleX(0.975)">Box Office</span><span class="n">Folgen: 119</span><span class="d">30.06.2013</span></div>
<div class="it" style="left:320px;top:298.6px"><svg class="th" width="39.5" height="39.5" viewBox="0 0 40 40"><rect width="40" height="40" fill="#a85c1c"/><g filter="url(#b05)"><rect width="40" height="40" fill="#b0601c"/><rect x="0" y="0" width="40" height="3" fill="#c88430"/><rect x="0" y="3" width="3" height="37" fill="#8a4410"/><rect x="36.5" y="3" width="3.5" height="37" fill="#c07828"/><rect x="3" y="3" width="2" height="28" fill="#d89838"/><rect x="8" y="0" width="1.5" height="6" fill="#7a3c0c"/><rect x="15" y="0" width="1.5" height="6" fill="#7a3c0c"/><rect x="22" y="0" width="1.5" height="6" fill="#8a480e"/><rect x="30" y="0" width="1.5" height="6" fill="#7a3c0c"/><rect x="0" y="30" width="40" height="10" fill="#8a4812"/><rect x="0" y="38" width="40" height="2" fill="#c87828"/></g><rect x="5" y="6.5" width="30.5" height="23" fill="#242c2c"/><rect x="5" y="6.5" width="30.5" height="23" fill="none" stroke="#6a3810" stroke-width="0.6"/><path d="M24 12 Q25 9 29 9.5 Q33 8.5 35 11 Q36 14 34 15.5 Q35 18 32 19 Q29 19.5 28 17 Q24 17 23.5 14.5 Q23 13 24 12 Z M26 13 Q29 11 32 12.5 M28 17 Q30 15 33 15.5" fill="none" stroke="#d4d040" stroke-width="1"/><text x="6" y="15.6" font-family="Liberation Serif, serif" font-size="3.4" font-weight="bold" fill="#e8e8e8" textLength="11">BRAIN</text><text x="6" y="22.2" font-family="Liberation Serif, serif" font-size="3.4" font-weight="bold" fill="#e8e8e8" textLength="13.5">TUNING</text><text x="4" y="37" font-family="Liberation Sans, sans-serif" font-size="7" font-weight="bold" fill="#a4b41c" textLength="26" lengthAdjust="spacingAndGlyphs">einslive</text><g transform="translate(30.3,31.7)"><rect width="7" height="5.6" fill="#3c3c3c"/><rect y="1.9" width="7" height="1.9" fill="#e01010"/><rect y="3.7" width="7" height="1.9" fill="#ffce00"/></g></svg><span class="t" style="transform:scaleX(1.028)">Braintuning</span><span class="n">Folgen: 9</span><span class="d">15.02.2013</span></div>
<div class="it" style="left:480px;top:298.6px"><svg class="th" width="39.5" height="39.5" viewBox="0 0 40 40"><rect width="40" height="40" fill="#3a3a3a"/><rect x="0" y="8" width="40" height="23.5" fill="#0c0a0a"/><g filter="url(#b05)"><path d="M0 12 Q20 6 40 13 L40 16 Q20 9 0 14 Z" fill="#a01018" opacity="0.6"/><path d="M0 29 Q16 24 30 25 Q37 22 40 15 L40 26 Q34 30 22 29 Q10 29 0 31 Z" fill="#c81420"/><path d="M26 24 Q36 20 40 12 L40 18 Q36 24 28 26 Z" fill="#e02430"/><path d="M29 9.5 Q34 11.5 39 8 Q36 13 31 12 Z" fill="#d81824"/></g><text x="2" y="19.8" font-family="Liberation Sans, sans-serif" font-size="8.2" font-weight="bold" fill="#d8141c" stroke="#f4e4e4" stroke-width="0.5" paint-order="stroke" textLength="35" lengthAdjust="spacingAndGlyphs">BRAVO</text><text x="9" y="26.2" font-family="Liberation Sans, sans-serif" font-size="6.6" font-weight="bold" fill="#ece4f4" textLength="22" lengthAdjust="spacingAndGlyphs">WebTV</text><rect x="0.3" y="0.3" width="39.4" height="39.4" fill="none" stroke="#222" stroke-width="0.6"/><g transform="translate(30.3,31.7)"><rect width="7" height="5.6" fill="#3c3c3c"/><rect y="1.9" width="7" height="1.9" fill="#e01010"/><rect y="3.7" width="7" height="1.9" fill="#ffce00"/></g></svg><span class="t" style="transform:scaleX(0.945)">BRAVO Web TV</span><span class="n">Folgen: 568</span><span class="d">01.01.0001</span></div>
<div class="it" style="left:640px;top:298.6px"><svg class="th" width="39.5" height="39.5" viewBox="0 0 40 40"><rect width="40" height="40" fill="#0a0a0a"/><g filter="url(#b1)"><rect width="40" height="40" fill="#100e0c"/><ellipse cx="10" cy="5" rx="4" ry="5" fill="#6a5c50"/><ellipse cx="21" cy="4" rx="4" ry="4" fill="#54482c"/><ellipse cx="32" cy="6" rx="5" ry="6" fill="#7a6e68"/><path d="M26 10 L38 10 L39 20 L28 20 Z" fill="#444044"/><path d="M2 10 L8 8 L10 22 L3 24 Z" fill="#3a4860"/><path d="M3 11 L6 20 L5 12 Z" fill="#e8d8a0"/><ellipse cx="21" cy="15" rx="6" ry="5" fill="#5e605a"/><path d="M14 30 L16 20 Q21 17 26 20 L29 30 Z" fill="#6c5e52"/><ellipse cx="21" cy="22" rx="3" ry="4" fill="#c0b0a0"/><path d="M29 19 L36 17 L38 22 L34 29 L30 28 Z" fill="#d8a030"/><path d="M33 22 L37 22 L36 29 L33 29 Z" fill="#8a90a0"/><path d="M4 24 L14 22 L14 30 L4 30 Z" fill="#282420"/></g><rect x="0" y="30" width="40" height="10" fill="#080808"/><text x="7" y="36.4" font-family="Liberation Sans, sans-serif" font-size="6" font-weight="bold" fill="#b49468" textLength="21" lengthAdjust="spacingAndGlyphs">coldmirror</text><g transform="translate(30.3,31.7)"><rect width="7" height="5.6" fill="#3c3c3c"/><rect y="1.9" width="7" height="1.9" fill="#e01010"/><rect y="3.7" width="7" height="1.9" fill="#ffce00"/></g></svg><span class="t" style="transform:scaleX(1.014)">Coldmirror Fan</span><span class="n">Folgen: 471</span><span class="d">18.08.2012</span></div>
<div class="it" style="left:0px;top:353.0px"><span class="t" style="left:auto;right:32px">m</span><span class="d">12.09.2013</span></div>
<div class="it" style="left:160px;top:353.0px"><svg class="th" width="39.5" height="39.5" viewBox="0 0 40 40"><rect width="40" height="40" fill="#000"/><rect x="9" y="9.3" width="21.2" height="20.2" fill="#fff"/><rect x="15.4" y="11.8" width="8.8" height="6.3" fill="#000"/><rect x="15.4" y="20.4" width="8.8" height="6.6" fill="#000"/><rect x="11.2" y="11.5" width="2.4" height="1.6" rx="0.4" fill="#000"/><rect x="26" y="11.5" width="2.4" height="1.6" rx="0.4" fill="#000"/><rect x="11.2" y="15.0" width="2.4" height="1.6" rx="0.4" fill="#000"/><rect x="26" y="15.0" width="2.4" height="1.6" rx="0.4" fill="#000"/><rect x="11.2" y="18.5" width="2.4" height="1.6" rx="0.4" fill="#000"/><rect x="26" y="18.5" width="2.4" height="1.6" rx="0.4" fill="#000"/><rect x="11.2" y="22.0" width="2.4" height="1.6" rx="0.4" fill="#000"/><rect x="26" y="22.0" width="2.4" height="1.6" rx="0.4" fill="#000"/><rect x="11.2" y="25.5" width="2.4" height="1.6" rx="0.4" fill="#000"/><rect x="26" y="25.5" width="2.4" height="1.6" rx="0.4" fill="#000"/><g transform="translate(30.3,31.7)"><rect width="7" height="5.6" fill="#3c3c3c"/><rect y="1.9" width="7" height="1.9" fill="#e01010"/><rect y="3.7" width="7" height="1.9" fill="#ffce00"/></g></svg><span class="t" style="transform:scaleX(0.959)">Coopzeitung: Rezept...</span><span class="n">Folgen: 240</span><span class="d">22.04.2013</span></div>
<div class="it" style="left:320px;top:353.0px"><svg class="th" width="39.5" height="39.5" viewBox="0 0 40 40"><rect width="40" height="40" fill="#fff"/><g filter="url(#b05)"><rect x="0" y="0" width="40" height="5" fill="#a4c4e8"/><path d="M0 5 Q20 1 40 3 L40 25 L0 25 Z" fill="url(#grass)"/><rect x="15.8" y="5" width="0.7" height="9" fill="#d8d8c0"/><rect x="14" y="3" width="4.5" height="3" rx="1" fill="#e8c020"/><ellipse cx="5.5" cy="9" rx="1.6" ry="2.4" fill="#f0f0f0"/><circle cx="5.2" cy="6.4" r="1" fill="#3a2a1a"/><rect x="4.6" y="11" width="1.6" height="4" fill="#c89878"/><ellipse cx="9.5" cy="10" rx="1.4" ry="2.6" fill="#c84858"/><circle cx="9.6" cy="7" r="1" fill="#c8a070"/><rect x="9" y="12.4" width="1.4" height="3.6" fill="#d8b090"/></g><path d="M24 18 Q19 11 14.5 15 Q11 19 14 26 Q18 34 27 38 Q34 32 37.5 24 Q39 16 34 15 Q28 14 24 18 Z" fill="#8a3c18" stroke="#8cc4e4" stroke-width="1.6"/><path d="M24 17 L29.5 12" stroke="#a8d4ec" stroke-width="1.2"/><path d="M18 23 Q25 18 33 20" stroke="#e8d8d0" stroke-width="0.9" fill="none"/><path d="M20 27 Q26 23 33 24" stroke="#e8d8d0" stroke-width="0.9" fill="none"/><rect x="24" y="29" width="5" height="5" fill="#78b8e0" transform="rotate(-20 26 31)"/><circle cx="16" cy="18" r="0.9" fill="#e8c030"/><circle cx="33" cy="17" r="0.9" fill="#e8c030"/><circle cx="17" cy="24" r="0.8" fill="#f0f0f0"/><rect x="0.5" y="0.5" width="39" height="39" fill="none" stroke="#444" stroke-width="1"/><g transform="translate(30.3,31.7)"><rect width="7" height="5.6" fill="#3c3c3c"/><rect y="1.9" width="7" height="1.9" fill="#e01010"/><rect y="3.7" width="7" height="1.9" fill="#ffce00"/></g></svg><span class="t" style="transform:scaleX(1.0)">Dahoam is Dahoam -...</span><span class="n">Folgen: 482</span><span class="d">12.12.2013</span></div>
<div class="it" style="left:480px;top:353.0px"><svg class="th" width="39.5" height="39.5" viewBox="0 0 40 40"><rect width="40" height="40" fill="#3c5820"/><g filter="url(#b1)"><rect width="40" height="28" fill="#4a6a28"/><rect x="0" y="0" width="40" height="6" fill="#5a7a30"/><path d="M10 27 L12 13 Q16 8 24 9 Q34 10 39 18 L40 27 Z" fill="#d8d8d8"/><path d="M24 20 Q32 18 40 22 L40 27 L22 27 Z" fill="#b8b4b0"/><ellipse cx="24.5" cy="5" rx="4" ry="4.6" fill="#c89878"/><path d="M20 22 L40 26 L40 30 L20 30 Z" fill="#3a2a18"/></g><rect x="0" y="27.5" width="40" height="12.5" fill="#1c2c1c"/><rect x="0" y="27.5" width="40" height="1.4" fill="#101810"/><rect x="1.6" y="12.4" width="21" height="12.6" rx="1.2" fill="#080808" stroke="#f4f4f4" stroke-width="1"/><rect x="0.8" y="11.6" width="22.6" height="14.2" rx="1.6" fill="none" stroke="#080808" stroke-width="0.8"/><text x="4.6" y="22.6" font-family="Liberation Sans, sans-serif" font-size="10" font-weight="bold" font-style="italic" fill="#fff" textLength="15.4" lengthAdjust="spacingAndGlyphs">HD</text><text x="0.4" y="33.2" font-family="Liberation Serif, serif" font-size="4.6" font-weight="bold" fill="#f4f4f4" textLength="39" lengthAdjust="spacingAndGlyphs">„Dahoam is ned</text><text x="6" y="38.6" font-family="Liberation Serif, serif" font-size="4.6" font-weight="bold" fill="#f4f4f4" textLength="24" lengthAdjust="spacingAndGlyphs">wo anders“</text><g transform="translate(30.3,31.7)"><rect width="7" height="5.6" fill="#3c3c3c"/><rect y="1.9" width="7" height="1.9" fill="#e01010"/><rect y="3.7" width="7" height="1.9" fill="#ffce00"/></g></svg><span class="t" style="transform:scaleX(0.983)">Dahoam is ned wo...</span><span class="n">Folgen: 14</span><span class="d">30.09.2010</span></div>
<div class="it" style="left:640px;top:353.0px"><svg class="th" width="39.5" height="39.5" viewBox="0 0 40 40"><rect width="40" height="40" fill="#8a7858"/><g filter="url(#b1)"><rect width="40" height="40" fill="#a07838"/><path d="M12 0 L40 0 L40 14 L22 16 L14 10 Z" fill="#7c8ca0"/><path d="M28 0 L40 0 L40 5 L30 4 Z" fill="#d8dce4"/><ellipse cx="24" cy="10" rx="6" ry="3.4" fill="#e0d4b0"/><path d="M22 7 L26 5.5 L30 7 L26 8 L24 11 Z" fill="#4a4a38"/><path d="M10 10 L22 14 L40 12 L40 18 L8 18 Z" fill="#c07c30"/><rect x="0" y="22" width="40" height="7" fill="#3e3020"/><path d="M10 29 L40 26 L40 40 L10 40 Z" fill="#5e6c20"/><path d="M14 30 L30 28 L34 33 L18 35 Z" fill="#a89038"/><path d="M0 0 L10 0 Q13 6 11 12 Q9 17 4 17 L0 15 Z" fill="#d8a078"/><path d="M0 0 L12 0 Q13 4 12 8 Q10 3 5 2 L0 4 Z" fill="#7a4a28"/><path d="M3 11 Q6 13 9 11 Q6 14.5 3 11 Z" fill="#f8f0e8"/><path d="M0 18 L8 17 L11 24 L10 40 L0 40 Z" fill="#c8c0a0"/><path d="M0 20 L4 19 L5 40 L0 40 Z" fill="#e0dcc8"/></g><rect x="2" y="15.6" width="35" height="7.4" fill="#2a1a10" opacity="0.35"/><text x="2.6" y="21.6" font-family="Liberation Sans, sans-serif" font-size="7" font-weight="bold" fill="#cc3418" textLength="33.5" lengthAdjust="spacingAndGlyphs">eXperiment</text><rect x="10" y="22.4" width="22" height="2.8" fill="#2a2018"/><text x="11" y="24.7" font-family="Liberation Sans, sans-serif" font-size="2.4" font-weight="bold" fill="#f0ece0" textLength="20">WO IST DEIN LIMIT?</text><g transform="translate(30.3,31.7)"><rect width="7" height="5.6" fill="#3c3c3c"/><rect y="1.9" width="7" height="1.9" fill="#e01010"/><rect y="3.7" width="7" height="1.9" fill="#ffce00"/></g></svg><span class="t" style="transform:scaleX(0.977)">Das Experiment - Wo...</span><span class="n">Folgen: 18</span><span class="d">10.12.2013</span></div>
<div class="it" style="left:0px;top:407.4px"><svg class="th" width="39.5" height="39.5" viewBox="0 0 40 40"><rect width="40" height="40" fill="#fff"/><rect x="0.25" y="0.25" width="39.5" height="39.5" fill="none" stroke="#ececec" stroke-width="0.5"/><g transform="translate(0,2.8)"><path d="M7.6 22.8 L13.4 18.4" stroke="#111" stroke-width="1.5" stroke-linecap="round"/><path d="M31.8 22.8 L26 18.4" stroke="#111" stroke-width="1.5" stroke-linecap="round"/><path d="M27 7.5 L29.5 5" stroke="#111" stroke-width="1.4"/><path d="M12.4 7.6 L10 6" stroke="#111" stroke-width="1.4"/><path d="M2 1.6 Q7 0.2 10.4 3 Q12.4 5.6 10.8 7.4 Q7 8.4 4.4 5.6 Q2.8 3.8 2 1.6 Z" fill="#0c0c0c"/><g transform="rotate(-33 32 4.4)"><rect x="26.6" y="1.8" width="11.4" height="5.6" rx="0.6" fill="#4a4a4a"/><rect x="29" y="2.8" width="9" height="0.7" fill="#e4e4e4"/><rect x="29" y="4.3" width="9" height="0.7" fill="#e4e4e4"/><rect x="29" y="5.8" width="9" height="0.7" fill="#e4e4e4"/></g><path d="M15.6 18.6 L15.6 21.8 L23.6 21.8 L23.6 18.6" fill="#d8d8d8" stroke="#111" stroke-width="1"/><circle cx="19.6" cy="12.2" r="7.5" fill="#fff" stroke="#111" stroke-width="1.4"/><rect x="16.4" y="19" width="6.4" height="2.3" fill="#c4c4c4"/><circle cx="16.7" cy="13.8" r="2.2" fill="#0c0c0c"/><circle cx="22.5" cy="13.8" r="2.2" fill="#0c0c0c"/><circle cx="16.7" cy="13.8" r="0.8" fill="#777"/><circle cx="22.5" cy="13.8" r="0.8" fill="#777"/><rect x="18.6" y="17" width="2" height="0.8" fill="#999"/></g><text x="10.8" y="32.7" font-family="Liberation Sans, sans-serif" font-size="6.4" font-weight="bold" fill="#111" stroke="#111" stroke-width="0.35" textLength="17" lengthAdjust="spacingAndGlyphs">DE-LITE</text><text x="11.2" y="36.9" font-family="Liberation Sans, sans-serif" font-size="3.2" font-weight="bold" fill="#111" stroke="#111" stroke-width="0.15" textLength="16.4" lengthAdjust="spacingAndGlyphs">fun cooking</text><g transform="translate(30.3,31.7)"><rect width="7" height="5.6" fill="#3c3c3c"/><rect y="1.9" width="7" height="1.9" fill="#e01010"/><rect y="3.7" width="7" height="1.9" fill="#ffce00"/></g></svg><span class="t" style="transform:scaleX(0.997)">De-Lite - Fun Cooking</span><span class="n">Folgen: 61</span><span class="d">10.01.2013</span></div>
<div class="it" style="left:160px;top:407.4px"><svg class="th" width="39.5" height="39.5" viewBox="0 0 40 40"><rect width="40" height="40" fill="#fff"/><rect x="0.25" y="0.25" width="39.5" height="39.5" fill="none" stroke="#e4e4e4" stroke-width="0.5"/><text x="6.6" y="11.2" font-family="Liberation Serif, serif" font-size="4.8" font-weight="bold" fill="#2c3c6c" textLength="26" lengthAdjust="spacingAndGlyphs">DAIMLER</text><rect x="1.6" y="25.2" width="36.6" height="13.2" rx="0.8" fill="#132848"/><text x="6.8" y="35" font-family="Liberation Sans, sans-serif" font-size="5.4" fill="#6cacdc" textLength="24" lengthAdjust="spacingAndGlyphs">VideoCast</text><g transform="translate(30.3,31.7)"><rect width="7" height="5.6" fill="#3c3c3c"/><rect y="1.9" width="7" height="1.9" fill="#e01010"/><rect y="3.7" width="7" height="1.9" fill="#ffce00"/></g></svg><span class="t" style="transform:scaleX(0.987)">Der Daimler VideoCast</span><span class="n">Folgen: 32</span><span class="d">24.09.2009</span></div>
<div class="it" style="left:320px;top:407.4px"><svg class="th" width="39.5" height="39.5" viewBox="0 0 40 40"><rect width="40" height="40" fill="#2c2410"/><g filter="url(#b1)"><rect width="40" height="40" fill="#3a3016"/><path d="M0 0 L14 0 L10 14 L0 20 Z" fill="#8a7c3c"/><path d="M30 0 L40 0 L40 16 L32 14 Z" fill="#4a4420"/><rect x="0" y="14" width="8" height="8" fill="#5a5424"/><path d="M9 12 Q9 2 20 1.5 Q31 2 31 12 Q31 18 28 20 L27 10 Q20 6 14 10 L13 20 Q9 18 9 12 Z" fill="#24160a"/><ellipse cx="20" cy="13.5" rx="6.6" ry="8.8" fill="#c49c6c"/><path d="M14 8 Q20 4 27 8 L27 10 Q20 7 14 10 Z" fill="#3a2412"/><path d="M20 8 L26 10 L26 20 L21 22 Z" fill="#9a7448"/><path d="M0 40 L2 26 Q8 21 15 22 L20 27 L26 22 Q34 22 38 27 L40 40 Z" fill="#1c160a"/><path d="M16 22 L20 34 L25 22 Q20 25 16 22 Z" fill="#8a7c54"/></g><path d="M33.6 2 L34.6 2.2 L28 38 L26.4 38 Z" fill="#d0c8a4"/><text x="4.8" y="35.6" font-family="Liberation Serif, serif" font-size="11.4" fill="#a87c44" textLength="24.6" lengthAdjust="spacingAndGlyphs">HOBBIT</text><rect x="6" y="37" width="20" height="0.5" fill="#7a5830"/><g transform="translate(30.3,31.7)"><rect width="7" height="5.6" fill="#3c3c3c"/><rect y="1.9" width="7" height="1.9" fill="#e01010"/><rect y="3.7" width="7" height="1.9" fill="#ffce00"/></g></svg><span class="t" style="transform:scaleX(0.974)">Der Hobbit - Eine...</span><span class="n">Folgen: 5</span><span class="d">25.03.2013</span></div>
<div class="it" style="left:480px;top:407.4px"><svg class="th" width="39.5" height="39.5" viewBox="0 0 40 40"><rect width="40" height="40" fill="#fff"/><g filter="url(#b1)"><rect width="40" height="25" fill="#6a4826"/><rect x="14" y="2" width="10" height="8" fill="#c09858"/><rect x="0" y="0" width="40" height="2" fill="#2a1a0c"/><path d="M0 25 L1 15 Q4 11 8 11 Q13 12 15 16 L15 25 Z" fill="#c8a880"/><path d="M6.5 11 L8 24 L10 11 Z" fill="#f0ece8"/><rect x="7.6" y="13" width="1.6" height="12" fill="#c82020"/><ellipse cx="7.8" cy="6.6" rx="3.6" ry="4.6" fill="#d89878"/><path d="M4 5 Q7 0.5 11.5 4 L11 6 Q8 3 4.5 6.5 Z" fill="#3a2818"/><path d="M13 25 L14 17 Q17 14 20 14 Q26 14 28 18 L29 25 Z" fill="#161616"/><path d="M18.6 14 L20.4 22 L22.4 14 Z" fill="#f0f0f0"/><rect x="19.8" y="15.5" width="1.4" height="8" fill="#c8cc48"/><ellipse cx="20.4" cy="9.4" rx="3.4" ry="4.4" fill="#d0a080"/><path d="M16.8 8 Q20 3.6 24 7.6 L23.6 9 Q20 6 17.2 9.4 Z" fill="#a8a8a0"/><path d="M27 25 L28 15 Q31 11 35 11 Q39 12 40 15 L40 25 Z" fill="#a4946c"/><path d="M31.6 12 L33.6 18 L35.6 12 Z" fill="#e8e8e8"/><ellipse cx="33.4" cy="6.6" rx="3.8" ry="4.8" fill="#dca88c"/></g><rect x="1" y="23.6" width="38" height="16" fill="#fff"/><rect x="2" y="23" width="25" height="4" fill="#fff"/><text x="4" y="26.8" font-family="Liberation Sans, sans-serif" font-size="3.4" fill="#c87c44" textLength="20.6" lengthAdjust="spacingAndGlyphs">der Sonntags</text><rect x="3.6" y="27.9" width="33.8" height="4.9" rx="0.6" fill="#cc8048"/><text x="4.4" y="32.1" font-family="Liberation Sans, sans-serif" font-size="4.9" font-weight="bold" fill="#fff" textLength="32.4" lengthAdjust="spacingAndGlyphs">Stammtisch</text><rect x="0.5" y="0.5" width="39" height="39" fill="none" stroke="#444" stroke-width="1"/><g transform="translate(30.3,31.7)"><rect width="7" height="5.6" fill="#3c3c3c"/><rect y="1.9" width="7" height="1.9" fill="#e01010"/><rect y="3.7" width="7" height="1.9" fill="#ffce00"/></g></svg><span class="t" style="transform:scaleX(0.973)">Der Sonntags...</span><span class="n">Folgen: 26</span><span class="d">08.12.2013</span></div>
<div class="it" style="left:640px;top:407.4px"><svg class="th" width="39.5" height="39.5" viewBox="0 0 40 40"><rect width="40" height="40" fill="#a41c28"/><g filter="url(#b1)"><rect x="0" y="5" width="40" height="28" fill="#a01a26"/><ellipse cx="13" cy="17" rx="11" ry="6" fill="#b03840"/><ellipse cx="12" cy="17" rx="4.4" ry="4" fill="#b03840"/><circle cx="12" cy="17" r="2.6" fill="none" stroke="#d06870" stroke-width="0.7"/><circle cx="12.4" cy="16.6" r="0.9" fill="#e8a8a8"/><path d="M2 12 Q12 7 24 12" stroke="#801018" stroke-width="1.4" fill="none"/><rect x="0" y="26" width="40" height="6" fill="#941420"/></g><rect x="0" y="0" width="40" height="5.4" fill="#b43038"/><rect x="0" y="0" width="40" height="1.6" fill="#c45058"/><text x="1.4" y="4.7" font-family="Liberation Sans, sans-serif" font-size="4.6" font-weight="bold" fill="#fff" textLength="11.5">WDR</text><circle cx="31.6" cy="17" r="6.8" fill="#060204"/><rect x="32" y="1.2" width="5.2" height="3.8" fill="#3a1a20"/><rect x="32" y="6" width="5.2" height="4.4" fill="#f0f0f0"/><circle cx="34.6" cy="8.2" r="1.2" fill="none" stroke="#888" stroke-width="0.4"/><rect x="0" y="32" width="40" height="8" fill="#d41818"/><rect x="8" y="33" width="8.4" height="5.6" fill="#f4f4f4"/><text x="8.4" y="37.8" font-family="Liberation Sans, sans-serif" font-size="5.6" font-weight="bold" fill="#d41818" textLength="7.6" lengthAdjust="spacingAndGlyphs">die</text><text x="16.8" y="37.8" font-family="Liberation Sans, sans-serif" font-size="5.4" font-weight="bold" fill="#fff" textLength="13.6" lengthAdjust="spacingAndGlyphs">story</text><g transform="translate(30.3,31.7)"><rect width="7" height="5.6" fill="#3c3c3c"/><rect y="1.9" width="7" height="1.9" fill="#e01010"/><rect y="3.7" width="7" height="1.9" fill="#ffce00"/></g></svg><span class="t" style="transform:scaleX(0.996)">die story - zum...</span><span class="n">Folgen: 221</span><span class="d">09.12.2013</span></div>
<div class="it" style="left:0px;top:461.8px"><svg class="th" width="39.5" height="39.5" viewBox="0 0 40 40"><rect width="40" height="40" fill="#050505"/><g filter="url(#b1)"><path d="M1 9 L1 2 Q10 0 18 3 Q26 8 34 5 L39 3 L39 9 Z" fill="#1a4c4a"/><path d="M20 5 Q28 9 39 3 L39 9 L22 9 Z" fill="#202a2a"/><path d="M30 9 L39 3 L39 9 Z" fill="#888"/><ellipse cx="8" cy="9" rx="6" ry="1.6" fill="#d8c8b8"/></g><rect x="0" y="0" width="40" height="1" fill="#050505"/><rect x="0" y="0" width="0.8" height="40" fill="#050505"/><rect x="39.2" y="0" width="0.8" height="40" fill="#050505"/></svg></div>
<div class="it" style="left:160px;top:461.8px"><svg class="th" width="39.5" height="39.5" viewBox="0 0 40 40"><rect width="40" height="40" fill="#fff"/><rect x="0.25" y="0.25" width="39.5" height="39.5" fill="none" stroke="#e8e8e8" stroke-width="0.5"/><circle cx="5.2" cy="5" r="2.2" fill="#f4f6fa" stroke="#1c3c78" stroke-width="0.7"/><circle cx="9.8" cy="5" r="2.5" fill="#12306c"/><rect x="8.6" y="4.2" width="2.4" height="1.6" fill="#c8d4ec"/><rect x="4.2" y="4" width="2" height="2" fill="#a8b8d8"/></svg></div>
<div class="it" style="left:320px;top:461.8px"><svg class="th" width="39.5" height="39.5" viewBox="0 0 40 40"><rect width="40" height="40" fill="#fff"/><rect x="0.25" y="0.25" width="39.5" height="39.5" fill="none" stroke="#e8e8e8" stroke-width="0.5"/><circle cx="5.2" cy="5" r="2.2" fill="#f4f6fa" stroke="#1c3c78" stroke-width="0.7"/><circle cx="9.8" cy="5" r="2.5" fill="#12306c"/><rect x="8.6" y="4.2" width="2.4" height="1.6" fill="#c8d4ec"/><rect x="4.2" y="4" width="2" height="2" fill="#a8b8d8"/></svg></div>
<div class="it" style="left:480px;top:461.8px"><svg class="th" width="39.5" height="39.5" viewBox="0 0 40 40"><rect width="40" height="40" fill="#fff"/><rect x="0.25" y="0.25" width="39.5" height="39.5" fill="none" stroke="#e8e8e8" stroke-width="0.5"/><circle cx="5.2" cy="5" r="2.2" fill="#f4f6fa" stroke="#1c3c78" stroke-width="0.7"/><circle cx="9.8" cy="5" r="2.5" fill="#12306c"/><rect x="8.6" y="4.2" width="2.4" height="1.6" fill="#c8d4ec"/><rect x="4.2" y="4" width="2" height="2" fill="#a8b8d8"/></svg></div>
<div class="it" style="left:640px;top:461.8px"><svg class="th" width="39.5" height="39.5" viewBox="0 0 40 40"><rect width="40" height="40" fill="#fff"/><rect x="0.25" y="0.25" width="39.5" height="39.5" fill="none" stroke="#e8e8e8" stroke-width="0.5"/><circle cx="5.2" cy="5" r="2.2" fill="#f4f6fa" stroke="#1c3c78" stroke-width="0.7"/><circle cx="9.8" cy="5" r="2.5" fill="#12306c"/><rect x="8.6" y="4.2" width="2.4" height="1.6" fill="#c8d4ec"/><rect x="4.2" y="4" width="2" height="2" fill="#a8b8d8"/></svg></div>
</div>
<div id="menu">
<div class="mi">Alle Unterkategorien</div>
<div class="mi">Hörspiele</div>
<div class="mi">Comedy</div>
<div class="mi">TV und Video</div>
<div class="mi">Musik</div>
<div class="mi">Shows</div>
<div class="mi">Dokumentationen</div>
<div class="mi">Persönliche Journale</div>
<div class="mi">Science Fiction</div>
<div class="mi">Kino und Film</div>
<div class="mi">Spiele</div>
</div>
<div id="nav">
<svg width="800" height="30" viewBox="0 0 800 30">
<g fill="none" stroke="#a0a0a0" stroke-width="1.3" stroke-linejoin="miter">
<path d="M19.5 10.5 L15.6 14.4 L19.5 18.3 M16 14.4 L31.5 14.4 Q34.6 14.4 34.6 17.6 Q34.6 21 31.5 21 L23.5 21"/>
<path d="M64.2 21 L64.2 14.6 L75 9.8 L85.8 14.6 L85.8 21 Z"/>
<path d="M115.6 14.6 L132.4 14.6 L132.4 21 L115.6 21 Z M119.4 11 L136.4 11 L136.4 17.6 L134.4 17.6"/>
</g>
<g fill="#7c7c7c">
<path d="M567.5 8.6 L574.4 8.6 L574.4 22 L565 22 L565 11.4 L566.2 11.4 L566.2 10 L567.5 10 Z"/>
<path d="M592.4 9 L606.4 9 L606.4 22 L592.4 22 Z M593.6 10.2 L593.6 20.8 L605.2 20.8 L605.2 10.2 Z" fill-rule="evenodd"/>
<path d="M594.4 20 L594.4 17.4 L596.6 15 L598.6 17 L600.4 16 L604.4 18.2 L604.4 20 Z"/>
<path d="M626.4 9 L629.8 11.2 L626.4 13.4 L623 11.2 Z M633 9 L636.4 11.2 L633 13.4 L629.8 11.2 Z M626.4 13.6 L629.8 15.8 L626.4 18 L623 15.8 Z M633 13.6 L636.4 15.8 L633 18 L629.8 15.8 Z M629.8 16.6 L633 18.8 L629.8 21.4 L626.4 18.8 Z"/>
<path d="M655.4 21.4 Q651.6 21.4 651.6 18 Q651.6 15.2 654.6 14.8 Q655.2 10.2 659.6 10.2 Q663.2 10.2 664 13.8 Q667 14 667 17.6 Q667 21.4 663.4 21.4 L660.6 21.4 L660.6 17.4 L662.6 17.4 L659.4 13.8 L656.2 17.4 L658.2 17.4 L658.2 21.4 Z"/>
<path d="M682 10 L696.4 10 L696.4 21 L682 21 Z M683 10.8 L689.2 16 L695.4 10.8 Z" fill-rule="evenodd"/>
</g>
<g>
<path d="M768.8 21.4 L760.4 11.8 Q768.8 6.6 777.2 11.8 Z" fill="#33b5e5"/>
<path d="M762.4 13.6 Q768.8 9 775.2 13.6 M764.6 16.2 Q768.8 13.2 773 16.2 M766.6 18.6 Q768.8 17 771 18.6" stroke="#000" stroke-width="1" fill="none"/>
<rect x="780.6" y="9.4" width="8.8" height="12" fill="#4a4a4a"/>
<rect x="783.2" y="8" width="3.6" height="1.6" fill="#4a4a4a"/>
<rect x="780.6" y="17.6" width="8.8" height="3.8" fill="#33b5e5"/>
</g>
</svg>
<div id="clock">13:23</div>
</div>
</body></html>
